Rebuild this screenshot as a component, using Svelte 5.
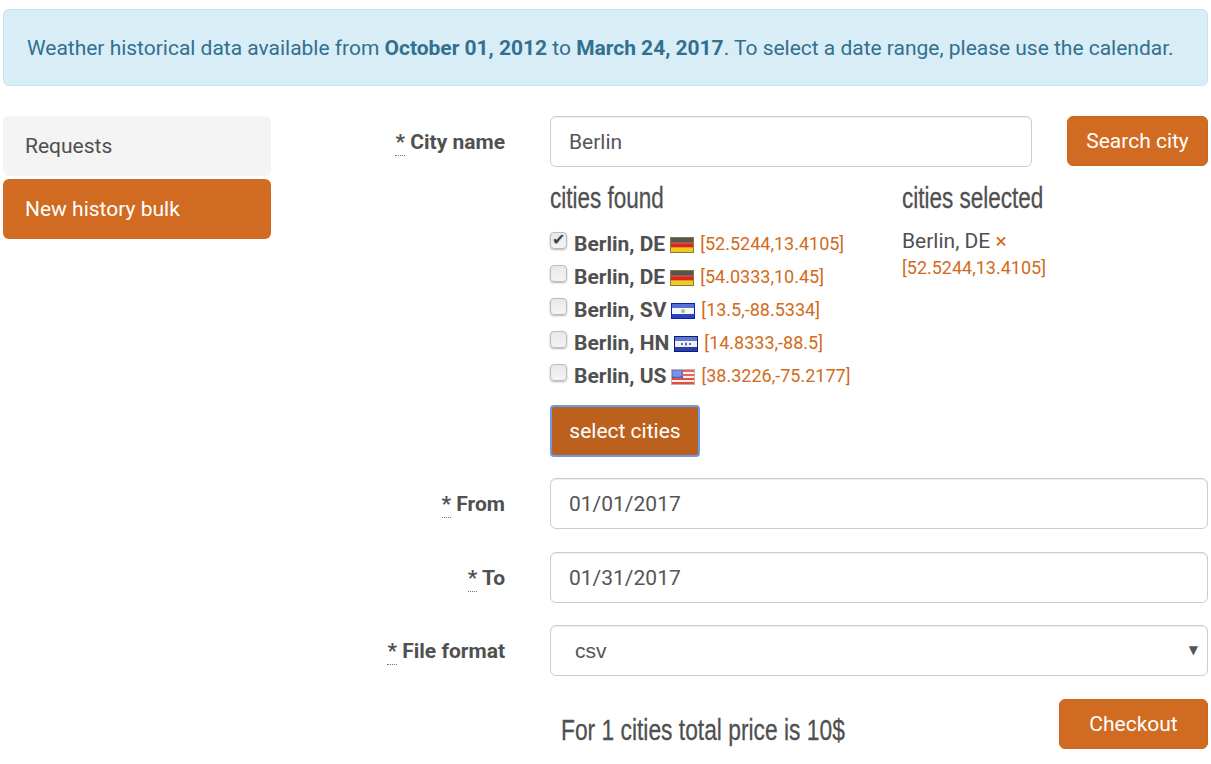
<script>
  const cities = [
    { name: "Berlin, DE", flag: "de", coords: "[52.5244,13.4105]", checked: true },
    { name: "Berlin, DE", flag: "de", coords: "[54.0333,10.45]", checked: false },
    { name: "Berlin, SV", flag: "sv", coords: "[13.5,-88.5334]", checked: false },
    { name: "Berlin, HN", flag: "hn", coords: "[14.8333,-88.5]", checked: false },
    { name: "Berlin, US", flag: "us", coords: "[38.3226,-75.2177]", checked: false },
  ];
</script>

{#snippet flag(code)}
  <svg class="flag" width="24" height="16" viewBox="0 0 24 16">
    {#if code === "de"}
      <rect width="24" height="16" fill="#8a7a3a" />
      <rect x="1" y="1" width="22" height="4.6" fill="#3a3a38" />
      <rect x="1" y="5.6" width="22" height="4.8" fill="#d8281e" />
      <rect x="1" y="10.4" width="22" height="4.6" fill="#f4c820" />
    {:else if code === "sv"}
      <rect width="24" height="16" fill="#0a1fa8" />
      <rect x="1" y="1" width="22" height="4" fill="#3a5ad0" />
      <rect x="1" y="5" width="22" height="6" fill="#f4f6fa" />
      <rect x="1" y="11" width="22" height="4" fill="#2a44c0" />
      <circle cx="12" cy="8" r="2" fill="#a8c070" />
    {:else if code === "hn"}
      <rect width="24" height="16" fill="#0a1a80" />
      <rect x="1" y="1" width="22" height="4" fill="#4a62c0" />
      <rect x="1" y="5" width="22" height="6" fill="#eef0fa" />
      <rect x="1" y="11" width="22" height="4" fill="#2a3ea8" />
      <rect x="7" y="7" width="2" height="2" fill="#5a70c8" />
      <rect x="11" y="6.5" width="2" height="3" fill="#5a70c8" />
      <rect x="15" y="7" width="2" height="2" fill="#5a70c8" />
    {:else}
      <rect width="24" height="16" fill="#c8b0a8" />
      {#each [1, 5, 9, 13] as y}
        <rect x="1" {y} width="22" height="2" fill="#e05040" />
      {/each}
      {#each [3, 7, 11] as y}
        <rect x="1" {y} width="22" height="2" fill="#fbeeea" />
      {/each}
      <rect x="1" y="1" width="11" height="8" fill="#4a62d0" />
      <path d="M2.5 3h8M2.5 5h8M2.5 7h8" stroke="#d8e0f8" stroke-width="1" stroke-dasharray="1 1" />
    {/if}
    <rect x="1" y="1" width="22" height="6" fill="#fff" opacity="0.14" />
  </svg>
{/snippet}

<div class="page">
  <div class="alert">
    Weather historical data available from <b>October 01, 2012</b> to <b>March 24, 2017</b>. To select a date range, please use the calendar.
  </div>

  <div class="layout">
    <nav class="pills">
      <a class="pill">Requests</a>
      <a class="pill active">New history bulk</a>
    </nav>

    <form class="form">
      <div class="row city">
        <label class="label" for="city"><abbr>*</abbr> City name</label>
        <input id="city" class="input" value="Berlin" />
        <button type="button" class="btn search">Search city</button>
      </div>

      <div class="results">
        <div class="found">
          <h4 class="heading"><span class="narrow">cities found</span></h4>
          <ul class="list">
            {#each cities as c}
              <li>
                <input type="checkbox" checked={c.checked} />
                <b>{c.name}</b>
                {@render flag(c.flag)}
                <span class="coords">{c.coords}</span>
              </li>
            {/each}
          </ul>
          <button type="button" class="btn select">select cities</button>
        </div>
        <div class="selected">
          <h4 class="heading"><span class="narrow">cities selected</span></h4>
          <div class="picked">Berlin, DE <span class="remove">×</span></div>
          <div class="coords">[52.5244,13.4105]</div>
        </div>
      </div>

      <div class="row from">
        <label class="label" for="from"><abbr>*</abbr> From</label>
        <input id="from" class="input" value="01/01/2017" />
      </div>
      <div class="row to">
        <label class="label" for="to"><abbr>*</abbr> To</label>
        <input id="to" class="input" value="01/31/2017" />
      </div>
      <div class="row format">
        <label class="label" for="format"><abbr>*</abbr> File format</label>
        <div class="select-wrap">
          <select id="format" class="input picker">
            <option>csv</option>
          </select>
        </div>
      </div>

      <div class="checkout">
        <p class="price"><span class="narrow">For 1 cities total price is 10$</span></p>
        <button type="button" class="btn">Checkout</button>
      </div>
    </form>
  </div>
</div>

<style>
  :global(body) {
    background: #fff;
    color: #505050;
    font-family: Roboto, "Liberation Sans", sans-serif;
    font-size: 21px;
  }

  .page {
    padding: 9px 3px 0;
  }

  .alert {
    box-sizing: border-box;
    height: 77px;
    display: block;
    padding: 25px 23px 0;
    background: #d9edf7;
    border: 1px solid #bce8f1;
    border-radius: 6px;
    color: #31708f;
    font-size: 20.98px;
    line-height: 27px;
    white-space: nowrap;
  }

  .layout {
    display: flex;
    margin-top: 30px;
  }

  .pills {
    width: 268px;
    flex: none;
    display: flex;
    flex-direction: column;
    gap: 3px;
  }

  .pill {
    height: 60px;
    line-height: 60px;
    padding-left: 22px;
    background: #f4f4f4;
    border-radius: 6px;
    color: #505050;
  }

  .pill.active {
    background: #d16b21;
    color: #fff;
  }

  .form {
    flex: 1;
    min-width: 0;
  }

  .row {
    display: grid;
    grid-template-columns: 234px 1fr;
    column-gap: 45px;
    align-items: start;
  }

  .row.city {
    grid-template-columns: 244px 482px 1fr;
    column-gap: 35px;
  }

  .row.city .label {
    padding-right: 10px;
  }

  .row.from {
    margin-top: 21px;
  }

  .row.to {
    margin-top: 23px;
  }

  .row.format {
    margin-top: 22px;
  }

  .label {
    height: 51px;
    text-align: right;
    font-weight: 700;
    line-height: 53px;
  }

  abbr {
    border-bottom: 1px dotted #777;
    font-weight: 700;
    padding-bottom: 1px;
  }

  .input {
    box-sizing: border-box;
    width: 100%;
    height: 51px;
    padding: 0 18px;
    border: 1px solid #ccc;
    border-radius: 6px;
    background: #fff;
    color: #555;
    font: inherit;
    box-shadow: inset 0 1px 1px rgba(0, 0, 0, 0.075);
    outline: none;
  }

  .select-wrap {
    position: relative;
  }

  .select-wrap::after {
    content: "▼";
    position: absolute;
    right: 10px;
    top: 18px;
    font: 12px/14px "DejaVu Sans", sans-serif;
    color: #555;
  }

  .picker {
    appearance: none;
    padding: 0 0 0 24px;
    font-size: 21px;
    font-family: "Liberation Sans", sans-serif;
  }

  .btn {
    height: 50px;
    padding: 0 19px;
    border: 1px solid #c9661f;
    border-radius: 6px;
    background: #d16b21;
    color: #fff;
    font: inherit;
    white-space: nowrap;
  }

  .search {
    padding: 0;
  }

  .results {
    display: grid;
    grid-template-columns: 352px 1fr;
    margin-left: 279px;
  }

  .heading {
    margin: 13px 0 0;
    font-family: "Liberation Sans", sans-serif;
    font-size: 30px;
    line-height: 35px;
    font-weight: 400;
    color: #505050;
  }

  .narrow {
    display: inline-block;
    transform: scaleX(0.75);
    transform-origin: left center;
    white-space: nowrap;
    -webkit-text-stroke: 0.3px #505050;
  }

  .list {
    list-style: none;
    margin: 12px 0 0;
    padding: 0;
  }

  .list li {
    height: 33px;
    display: flex;
    align-items: center;
    gap: 5px;
    white-space: nowrap;
  }

  .list input {
    appearance: none;
    box-sizing: border-box;
    position: relative;
    width: 17px;
    height: 17px;
    margin: -7px 2px 0 0;
    border: 1px solid #bbb;
    border-radius: 4px;
    background: linear-gradient(#e8e8e8, #f4f4f4);
    box-shadow: 0 1px 2px rgba(0, 0, 0, 0.3);
  }

  .list input:checked::after {
    content: "✔";
    position: absolute;
    left: 1px;
    top: -1px;
    font: 16px/16px "DejaVu Sans", sans-serif;
    color: #444;
  }

  .flag {
    flex: none;
    margin-top: 2px;
  }

  .coords {
    color: #d16b21;
    font-size: 18px;
  }

  .list .coords {
    margin-left: 1px;
  }

  .btn.select {
    display: block;
    width: 150px;
    height: 52px;
    margin-top: 13px;
    padding: 0;
    background: #bc601d;
    border: 2px solid #6a9ae8;
    border-radius: 4px;
  }

  .picked {
    margin-top: 13px;
    line-height: 26px;
  }

  .remove {
    color: #d16b21;
  }

  .selected .coords {
    margin-top: 1px;
    line-height: 26px;
    display: block;
  }

  .checkout {
    display: flex;
    justify-content: space-between;
    align-items: flex-start;
    margin: 23px 0 0 279px;
  }

  .checkout .btn {
    width: 149px;
    padding: 0;
  }

  .price {
    margin: 11px 0 0 11px;
    font-family: "Liberation Sans", sans-serif;
    font-size: 30px;
    line-height: 40px;
  }

  .price .narrow {
    transform: scaleX(0.76);
  }
</style>
